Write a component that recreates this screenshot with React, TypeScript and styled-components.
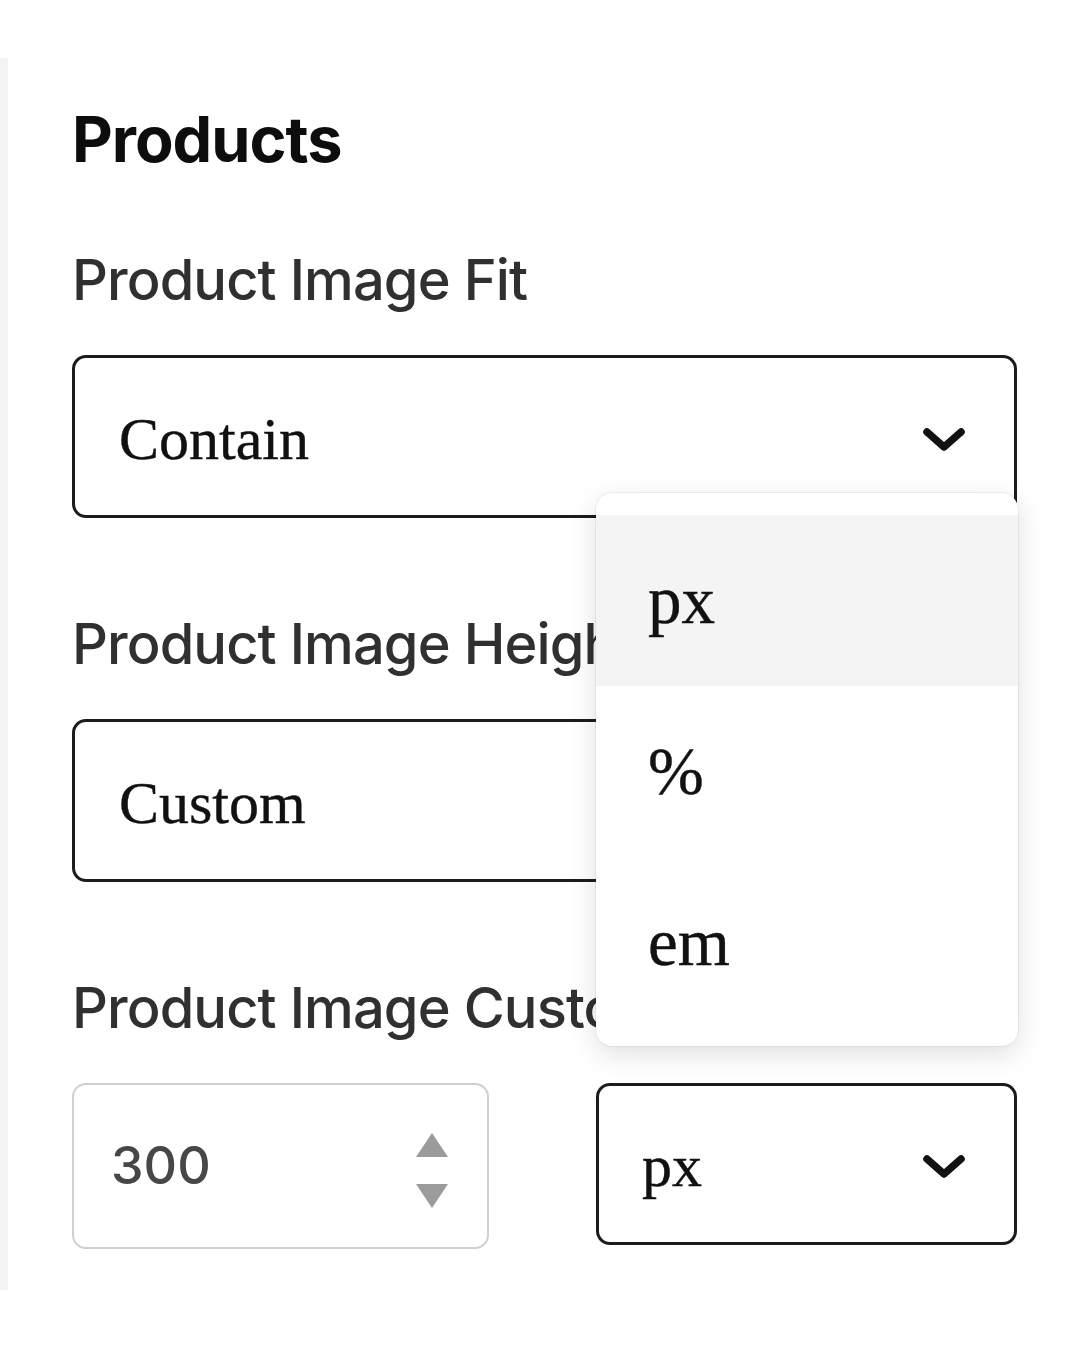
import React from "react";
import styled, { createGlobalStyle } from "styled-components";

const Global = createGlobalStyle`
  html, body { margin: 0; padding: 0; background: #ffffff; }
  body { font-family: Inter, "Liberation Sans", sans-serif; }
  * { box-sizing: border-box; }
`;

const Page = styled.div`
  display: flex;
  align-items: flex-start;
  width: 1080px;
  height: 1350px;
  padding-top: 58px;
`;

const Strip = styled.div`
  width: 8px;
  height: 1232px;
  background: #f3f3f3;
  flex: none;
`;

const Panel = styled.div`
  flex: 1;
  padding: 0 63px 0 64px;
  display: flex;
  flex-direction: column;
`;

const Heading = styled.h2`
  margin: 43px 0 69px 0;
  font-family: Inter, "Liberation Sans", sans-serif;
  font-weight: 700;
  font-size: 63px;
  line-height: 76px;
  letter-spacing: -1px;
  color: #0d0d0d;
`;

const Field = styled.div`
  display: flex;
  flex-direction: column;
  gap: 41px;
  & + & {
    margin-top: 92px;
  }
`;

const Label = styled.div`
  font-family: Inter, "Liberation Sans", sans-serif;
  font-weight: 500;
  font-size: 56px;
  line-height: 68px;
  letter-spacing: -0.9px;
  color: #303030;
  white-space: nowrap;
`;

const SelectBox = styled.div<{ $h?: number }>`
  position: relative;
  height: ${(p) => p.$h ?? 163}px;
  border: 3px solid #1c1c1c;
  border-radius: 14px;
  background: #fff;
  display: flex;
  align-items: center;
  justify-content: space-between;
  padding: 0 48px 0 ${(p) => (p.$h ? 43 : 44)}px;
`;

const SelectText = styled.span`
  font-family: "Liberation Serif", "Times New Roman", serif;
  font-size: 60px;
  line-height: 1;
  color: #111;
  padding-top: 4px;
  -webkit-text-stroke: 0.4px #111;
`;

const Chevron = () => (
  <svg width="44" height="28" viewBox="0 0 44 28" style={{ marginTop: 6 }}>
    <polyline
      points="5,6 22,21 39,6"
      fill="none"
      stroke="#111"
      strokeWidth="7.5"
      strokeLinecap="round"
      strokeLinejoin="round"
    />
  </svg>
);

const Row = styled.div`
  display: grid;
  grid-template-columns: 417px 421px;
  justify-content: space-between;
  align-items: start;
`;

const NumberBox = styled.div`
  height: 166px;
  border: 2.5px solid #d0d0d0;
  border-radius: 14px;
  background: #fff;
  display: flex;
  align-items: center;
  justify-content: space-between;
  padding: 0 38px 0 37px;
`;

const NumberText = styled.span`
  font-family: Inter, "Liberation Sans", sans-serif;
  font-size: 52px;
  font-weight: 500;
  line-height: 1;
  color: #474747;
`;

const Spinner = styled.div`
  display: flex;
  flex-direction: column;
  gap: 25px;
  margin-top: 8px;
`;

const Triangle = ({ up }: { up?: boolean }) => (
  <svg width="34" height="26" viewBox="0 0 34 26">
    <polygon
      points={up ? "17,1 33,25 1,25" : "1,1 33,1 17,25"}
      fill="#9b9b9b"
    />
  </svg>
);

const UnitWrap = styled.div`
  position: relative;
`;

const Menu = styled.div`
  position: absolute;
  left: 0;
  right: -1px;
  bottom: calc(100% + 37px);
  padding: 22px 0 18px;
  background: #fff;
  border-radius: 16px;
  box-shadow: 0 0 0 1px rgba(0, 0, 0, 0.05), 0 8px 28px rgba(0, 0, 0, 0.13);
  z-index: 10;
`;

const MenuItem = styled.div<{ $active?: boolean }>`
  height: 171px;
  display: flex;
  align-items: center;
  padding-left: 52px;
  background: ${(p) => (p.$active ? "#f4f4f4" : "transparent")};
  font-family: "Liberation Serif", "Times New Roman", serif;
  font-size: 67px;
  line-height: 1;
  color: #111;
  -webkit-text-stroke: 0.4px #111;
`;

export default function App() {
  return (
    <>
      <Global />
      <Page>
        <Strip />
        <Panel>
          <Heading>Products</Heading>
          <Field>
            <Label>Product Image Fit</Label>
            <SelectBox>
              <SelectText>Contain</SelectText>
              <Chevron />
            </SelectBox>
          </Field>
          <Field>
            <Label>Product Image Height</Label>
            <SelectBox>
              <SelectText>Custom</SelectText>
              <Chevron />
            </SelectBox>
          </Field>
          <Field>
            <Label>Product Image Custom Height</Label>
            <Row>
              <NumberBox>
                <NumberText>300</NumberText>
                <Spinner>
                  <Triangle up />
                  <Triangle />
                </Spinner>
              </NumberBox>
              <UnitWrap>
                <Menu>
                  <MenuItem $active>px</MenuItem>
                  <MenuItem>%</MenuItem>
                  <MenuItem>em</MenuItem>
                </Menu>
                <SelectBox $h={162}>
                  <SelectText>px</SelectText>
                  <Chevron />
                </SelectBox>
              </UnitWrap>
            </Row>
          </Field>
        </Panel>
      </Page>
    </>
  );
}
